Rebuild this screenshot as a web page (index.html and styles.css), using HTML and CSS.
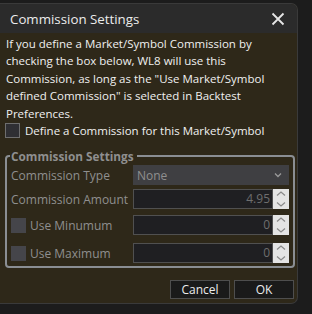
FILE: index.html
```html
<!DOCTYPE html>
<html lang="en">
<head>
  <meta charset="UTF-8">
  <title>Commission Settings</title>
  <link rel="stylesheet" href="styles.css">
</head>
<body>
  <div class="dialog">
    <div class="titlebar">
      <span class="title">Commission Settings</span>
      <svg class="close" width="14" height="14" viewBox="0 0 14 14">
        <path d="M1.5 1.5 L12.5 12.5 M12.5 1.5 L1.5 12.5" stroke="#e6e6e6" stroke-width="1.8" fill="none"/>
      </svg>
    </div>

    <div class="content">
      <p class="info">If you define a Market/Symbol Commission by checking the box below, WL8 will use this Commission, as long as the "Use Market/Symbol defined Commission" is selected in Backtest Preferences.</p>

      <label class="check-row">
        <span class="box"></span>
        <span>Define a Commission for this Market/Symbol</span>
      </label>

      <fieldset class="group">
        <legend>Commission Settings</legend>

        <div class="row first">
          <span class="label">Commission Type</span>
          <div class="combo">
            <span>None</span>
            <svg width="8" height="6" viewBox="0 0 8 6"><path d="M1 1.5 L4 4.5 L7 1.5" stroke="#9a9a9a" stroke-width="1.3" fill="none"/></svg>
          </div>
        </div>

        <div class="row second">
          <span class="label">Commission Amount</span>
          <div class="numeric">
            <span class="value">4.95</span>
            <div class="spin">
              <svg width="16" height="10" viewBox="0 0 16 10"><path d="M4 6.5 L8 3 L12 6.5" stroke="#8a8a8a" stroke-width="1.2" fill="none"/></svg>
              <svg width="16" height="10" viewBox="0 0 16 10"><path d="M4 3.5 L8 7 L12 3.5" stroke="#8a8a8a" stroke-width="1.2" fill="none"/></svg>
            </div>
          </div>
        </div>

        <div class="row third">
          <span class="label"><span class="box dim"></span>Use Minumum</span>
          <div class="numeric">
            <span class="value">0</span>
            <div class="spin">
              <svg width="16" height="10" viewBox="0 0 16 10"><path d="M4 6.5 L8 3 L12 6.5" stroke="#8a8a8a" stroke-width="1.2" fill="none"/></svg>
              <svg width="16" height="10" viewBox="0 0 16 10"><path d="M4 3.5 L8 7 L12 3.5" stroke="#8a8a8a" stroke-width="1.2" fill="none"/></svg>
            </div>
          </div>
        </div>

        <div class="row fourth">
          <span class="label"><span class="box dim"></span>Use Maximum</span>
          <div class="numeric">
            <span class="value">0</span>
            <div class="spin">
              <svg width="16" height="10" viewBox="0 0 16 10"><path d="M4 6.5 L8 3 L12 6.5" stroke="#8a8a8a" stroke-width="1.2" fill="none"/></svg>
              <svg width="16" height="10" viewBox="0 0 16 10"><path d="M4 3.5 L8 7 L12 3.5" stroke="#8a8a8a" stroke-width="1.2" fill="none"/></svg>
            </div>
          </div>
        </div>
      </fieldset>

      <div class="buttons">
        <button>Cancel</button>
        <button>OK</button>
      </div>
    </div>
  </div>
</body>
</html>
```

FILE: styles.css
```css
body {
  margin: 0;
  background-color: #1c1c1c;
  font-family: "Open Sans", "Noto Sans", sans-serif;
  font-size: 11.5px;
  color: #f0f0f0;
}

.dialog {
  width: 298px;
  height: 301px;
  margin-top: 3px;
  background-color: #2e2819;
  border: 1px solid #3a3a3a;
  border-left: none;
  border-radius: 0 7px 7px 0;
  overflow: hidden;
  box-sizing: border-box;
}

.titlebar {
  height: 29px;
  background-color: #2b2b2b;
  display: flex;
  align-items: center;
  justify-content: space-between;
  padding: 0 12px 0 10px;
}

.title {
  font-size: 13.3px;
  color: #ececec;
}

.content {
  padding: 2px 2px 0 5px;
}

.info {
  margin: 0 0 0 1px;
  line-height: 17.4px;
}

.check-row {
  display: flex;
  align-items: center;
  gap: 5px;
  margin-top: 1px;
}

.box {
  width: 13px;
  height: 13px;
  border: 1px solid #6e6e6e;
  background-color: #2f2f33;
  display: inline-block;
}

.box.dim {
  width: 15px;
  height: 15px;
  border: none;
  background-color: #45454a;
  margin-right: 4px;
}

.group {
  margin: 12px 0 0 0;
  padding: 0 4px 3px 4px;
  border: 2px solid #8a8e93;
  border-radius: 4px;
}

.group legend {
  font-weight: bold;
  font-size: 11.8px;
  line-height: 12px;
  color: #8f8f8f;
  padding: 0 3px 0 1px;
  margin-left: -1px;
}

.row {
  display: flex;
  align-items: center;
  justify-content: space-between;
  height: 20px;
}

.row.first {
  margin-top: 3px;
}

.row.second {
  margin-top: 4px;
}

.row.third {
  margin-top: 6px;
}

.row.fourth {
  margin-top: 8px;
}

.label {
  color: #8f8f8f;
  display: flex;
  align-items: center;
  font-size: 12px;
}

.combo {
  width: 156px;
  height: 20px;
  background-color: #3f3f42;
  color: #8f8f8f;
  display: flex;
  align-items: center;
  justify-content: space-between;
  padding: 0 7px 0 4px;
  box-sizing: border-box;
  font-size: 12px;
}

.numeric {
  width: 156px;
  height: 20px;
  display: flex;
}

.value {
  flex: 1;
  background-color: #1f1f22;
  border: 1px solid #505050;
  color: #6e6e6e;
  text-align: right;
  padding-right: 2px;
  line-height: 18px;
  font-size: 12px;
}

.spin {
  width: 16px;
  display: flex;
  flex-direction: column;
  background-color: #e4e4e4;
}

.spin svg {
  display: block;
}

.buttons {
  display: flex;
  justify-content: flex-end;
  gap: 4px;
  margin-top: 12px;
  padding-right: 1px;
}

.buttons button {
  width: 60px;
  height: 19px;
  background-color: #1a1a1a;
  color: #ececec;
  border: 1px solid #4e4e4e;
  font-family: "Open Sans", "Noto Sans", sans-serif;
  font-size: 12px;
  padding: 0;
}
```
